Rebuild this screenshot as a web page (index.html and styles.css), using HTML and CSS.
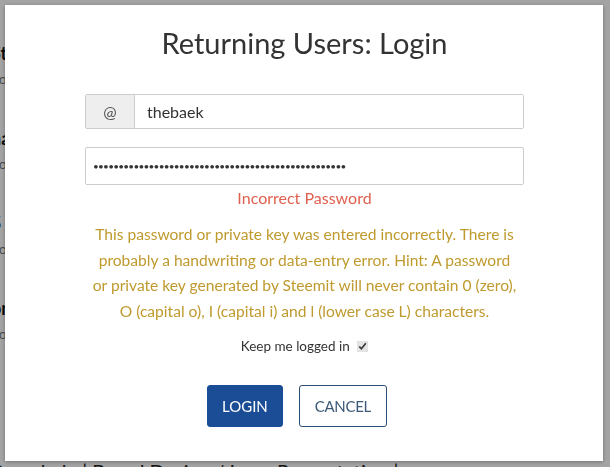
FILE: index.html
```html
<!DOCTYPE html>
<html lang="en">

<head>
    <meta charset="UTF-8">
    <title>Returning Users: Login</title>
    <link rel="stylesheet" href="styles.css">
</head>

<body>
    <div class="page">
        <div class="feed">
            <div class="post">
                <h3>Steemit weekly update</h3>
                <p>posted in steemit</p>
            </div>
            <div class="post">
                <h3>nature photography</h3>
                <p>posted in photography</p>
            </div>
            <div class="post">
                <h3>5 tips for new users</h3>
                <p>posted in steem</p>
            </div>
            <div class="post">
                <h3>on the road again</h3>
                <p>posted in travel</p>
            </div>
        </div>
        <p class="feed-bottom">Snowhale | Brand Design / Logo Presentation |</p>
    </div>

    <div class="overlay">
        <div class="modal">
            <h2 class="modal-title">Returning Users: Login</h2>

            <form class="login-form">
                <div class="input-group">
                    <span class="addon">@</span>
                    <input type="text" class="input" name="username" value="thebaek">
                </div>

                <input type="password" class="input password" name="password" value="abcdefghijabcdefghijabcdefghijabcdefghijabcdefghij">
                <div class="error">Incorrect Password</div>

                <p class="warning">This password or private key was entered incorrectly. There is probably a handwriting or data-entry error. Hint: A password or private key generated by Steemit will never contain 0 (zero), O (capital o), I (capital i) and l (lower case L) characters.</p>

                <label class="remember">Keep me logged in <input type="checkbox" checked></label>

                <div class="buttons">
                    <button type="button" class="btn btn-primary">LOGIN</button>
                    <button type="button" class="btn btn-outline">CANCEL</button>
                </div>
            </form>
        </div>
    </div>
</body>

</html>
```

FILE: styles.css
```css
html,
body {
    height: 100%;
}

body {
    margin: 0;
    background: #fff;
    font-family: Lato, "Liberation Sans", sans-serif;
    color: #333;
    overflow: hidden;
}

.page {
    height: 100%;
    position: relative;
}

.feed {
    padding-top: 42px;
    margin-left: -9px;
}

.post {
    padding: 0 0 40px;
}

.post h3 {
    margin: 0;
    font-size: 18px;
    font-weight: bold;
    color: #111;
}

.post p {
    margin: 6px 0 0;
    font-size: 14px;
    color: #777;
}

.feed-bottom {
    position: absolute;
    left: -8px;
    top: 459px;
    margin: 0;
    font-size: 20px;
    line-height: 24px;
    color: #222;
}

.overlay {
    position: fixed;
    inset: 0;
    background: rgba(0, 0, 0, 0.36);
    padding: 5px 7px 6px 5px;
    box-sizing: border-box;
}

.modal {
    height: 100%;
    background: #fff;
    box-shadow: 0 1px 4px rgba(0, 0, 0, 0.3);
    padding: 20px 79px 0 80px;
    box-sizing: border-box;
}

.modal-title {
    margin: 0;
    text-align: center;
    font-size: 29px;
    line-height: 36px;
    font-weight: normal;
    color: #333;
}

.login-form {
    display: flex;
    flex-direction: column;
    margin-top: 33px;
}

.input-group {
    display: flex;
    height: 35px;
    border: 1px solid #ccc;
    border-radius: 2px;
    box-sizing: border-box;
}

.addon {
    width: 48px;
    background: #eee;
    border-right: 1px solid #ccc;
    display: flex;
    align-items: center;
    justify-content: center;
    font-size: 16px;
    color: #555;
}

.input {
    font-family: Lato, "Liberation Sans", sans-serif;
    font-size: 16px;
    color: #333;
    border: none;
    outline: none;
    padding: 0 12px;
}

.input-group .input {
    flex: 1;
}

.password {
    flex: none;
    height: 38px;
    margin-top: 18px;
    border: 1px solid #ccc;
    border-radius: 2px;
    box-sizing: border-box;
    padding: 0 7px;
    font-size: 10px;
    letter-spacing: -0.75px;
}

.error {
    margin-top: 2px;
    text-align: center;
    font-size: 16px;
    line-height: 22px;
    color: #e0604f;
}

.warning {
    margin: 13px 0 0;
    padding: 0 7px;
    text-align: center;
    font-size: 15.6px;
    line-height: 25.6px;
    color: #bf9a2e;
}

.remember {
    margin-top: 12px;
    text-align: center;
    font-size: 13.5px;
    line-height: 20px;
    color: #333;
}

.remember input {
    margin: 0 0 0 4px;
    width: 11px;
    height: 11px;
    vertical-align: -1px;
    accent-color: #e4e4e4;
}

.buttons {
    display: flex;
    justify-content: center;
    gap: 16px;
    margin-top: 29px;
    padding-right: 15px;
}

.btn {
    height: 42px;
    border-radius: 3px;
    font-family: Lato, "Liberation Sans", sans-serif;
    font-size: 15px;
    padding: 0 15px;
    cursor: pointer;
}

.btn-primary {
    background: #1a4d96;
    border: 1px solid #1a4d96;
    color: #fff;
    padding: 0 14px;
}

.btn-outline {
    background: #fff;
    border: 1px solid #2b4e72;
    color: #3b5978;
    letter-spacing: -0.3px;
}
```
